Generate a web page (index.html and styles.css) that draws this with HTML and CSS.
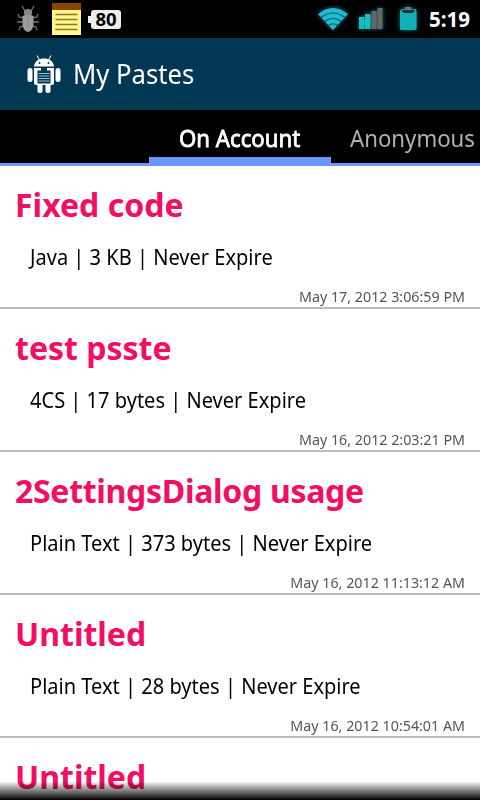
FILE: index.html
```html
<!DOCTYPE html>
<html lang="en">
<head>
  <meta charset="UTF-8" />
  <meta name="viewport" content="width=device-width, initial-scale=1.0"/>
  <title>My Pastes</title>
  <link rel="stylesheet" href="styles.css">
</head>
<body>

  <div class="status-bar">
    <svg class="icon-bug" width="24" height="28" viewBox="0 0 24 28">
      <g fill="none" stroke="#6f6f6f" stroke-width="1.3">
        <path d="M6 1l3 5M18 1l-3 5M8 13L3 12 2 9M16 13l5-1 1-3M7 17H1M17 17h6M8 21l-4 1-1 3M16 21l4 1 1 3"/>
      </g>
      <ellipse cx="12" cy="7.500" rx="4.200" ry="3.500" fill="#858585"/>
      <path d="M6.500 11q5.500-3 11 0v9q-1 6-5.500 7-4.500-1-5.500-7z" fill="#9c9c9c"/>
      <path d="M12 10v16" fill="none" stroke="#8a8a8a"/>
    </svg>
    <svg class="icon-note" width="29" height="32" viewBox="0 0 29 32">
      <rect width="29" height="32" fill="#fdf78c"/>
      <rect width="29" height="7" fill="#8a4509"/>
      <path d="M3.500 11.500h22M3.500 16.500h22M3.500 21.500h22M3.500 26.500h22" stroke="#94742c" stroke-width="1.300"/>
    </svg>
    <div class="battery-level">80</div>
    <svg class="icon-wifi" width="30" height="24" viewBox="0 0 30 24">
      <path d="M0 7Q15-5 30 7L15 23z" fill="#24b9d3"/>
      <path d="M3 10.500q12-9 24 0M6.500 14.500q8.500-6 17 0M10 18.500q5-3.500 10 0" fill="none" stroke="#075a6b" stroke-width="1.200"/>
    </svg>
    <svg class="icon-signal" width="24" height="22" viewBox="0 0 24 22">
      <rect x="0" y="9" width="5.500" height="12" fill="#18bdc4"/>
      <rect x="6" y="6" width="5.500" height="15" fill="#18bdc4"/>
      <rect x="12.500" y="3" width="5" height="18" fill="#6b6664"/>
      <rect x="18.500" y="0" width="5" height="21" fill="#6b6664"/>
    </svg>
    <svg class="icon-battery" width="17" height="24" viewBox="0 0 17 24">
      <path d="M5 0h6v2h5v4H1V2h4z" fill="#77716f"/>
      <rect x="0" y="3" width="16.500" height="20" rx="1" fill="#12b0b7"/>
      <path d="M2 3h12.500v1.500l-2 1.500h-8.500l-2-1.500z" fill="#163c40"/>
    </svg>
    <span class="clock">5:19</span>
  </div>

  <header class="action-bar">
    <svg class="logo" width="34" height="40" viewBox="0 0 34 40">
      <g fill="#fff">
        <path d="M7 12.500C7.500 7 12 4.500 17 4.500S26.500 7 27 12.500z"/>
        <path d="M7 14h20v15q0 2-2 2H9q-2 0-2-2z"/>
        <rect x="0.500" y="14" width="5" height="14" rx="2.500"/>
        <rect x="28.500" y="14" width="5" height="14" rx="2.500"/>
        <rect x="10.500" y="28" width="5" height="11" rx="2"/>
        <rect x="18.500" y="28" width="5" height="11" rx="2"/>
      </g>
      <path d="M12.500 6L10 1.500M21.500 6L24 1.500" stroke="#fff" stroke-width="1"/>
      <circle cx="12.500" cy="9" r="1" fill="#033855"/>
      <circle cx="21.500" cy="9" r="1" fill="#033855"/>
      <rect x="10.500" y="16.500" width="13" height="13" fill="#033855"/>
      <rect x="14" y="14" width="6" height="3" fill="#033855"/>
      <path d="M11.500 19.500h11M11.500 22h11M11.500 24.500h11M11.500 27h11" stroke="#9fb6c3" stroke-width="1"/>
    </svg>
    <h1>My Pastes</h1>
  </header>

  <nav class="tabs">
    <a class="tab active"><span>On Account</span></a>
    <a class="tab"><span>Anonymous</span></a>
  </nav>

  <ul class="paste-list">
    <li class="paste">
      <h2>Fixed code</h2>
      <p class="info">Java | 3 KB | Never Expire</p>
      <p class="date">May 17, 2012 3:06:59 PM</p>
    </li>
    <li class="paste">
      <h2>test psste</h2>
      <p class="info">4CS | 17 bytes | Never Expire</p>
      <p class="date">May 16, 2012 2:03:21 PM</p>
    </li>
    <li class="paste">
      <h2 class="long">2SettingsDialog usage</h2>
      <p class="info">Plain Text | 373 bytes | Never Expire</p>
      <p class="date">May 16, 2012 11:13:12 AM</p>
    </li>
    <li class="paste">
      <h2>Untitled</h2>
      <p class="info">Plain Text | 28 bytes | Never Expire</p>
      <p class="date">May 16, 2012 10:54:01 AM</p>
    </li>
    <li class="paste">
      <h2>Untitled</h2>
    </li>
  </ul>
  <div class="fade"></div>

</body>
</html>
```
FILE: styles.css
```css
* {
  box-sizing: border-box;
}
body {
  font-family: "Noto Sans", "Open Sans", sans-serif;
  background-color: #fff;
  color: #000;
  margin: 0;
  height: 800px;
  display: flex;
  flex-direction: column;
  overflow: hidden;
  position: relative;
}
h1, h2, p, ul {
  margin: 0;
  padding: 0;
  font-weight: normal;
}
svg {
  display: block;
  flex: none;
}
.status-bar {
  flex: none;
  height: 38px;
  background-color: #000;
  display: flex;
  align-items: center;
  padding: 0 9px 0 16px;
}
.icon-note {
  margin-left: 12px;
}
.battery-level {
  position: relative;
  margin-left: 10px;
  width: 30px;
  height: 19px;
  border-radius: 3px;
  background-color: #eee;
  color: #000;
  font-size: 18.5px;
  font-weight: bold;
  line-height: 18px;
  text-align: center;
}
.battery-level::before {
  content: "";
  position: absolute;
  left: -3px;
  top: 6px;
  width: 3px;
  height: 7px;
  background-color: #eee;
}
.icon-wifi {
  margin-left: auto;
}
.icon-wifi, .icon-signal, .icon-battery {
  filter: drop-shadow(0 0 2px #087984);
}
.icon-signal {
  margin-left: 11px;
}
.icon-battery {
  margin-left: 17px;
}
.clock {
  margin-left: 12px;
  width: 42px;
  color: #fff;
  font-size: 20.5px;
  font-weight: bold;
  white-space: nowrap;
}
.action-bar {
  flex: none;
  height: 72px;
  background-color: #033855;
  display: flex;
  align-items: center;
  padding-left: 27px;
}
.action-bar h1 {
  margin-left: 12px;
  color: #fff;
  font-size: 27px;
  line-height: 36px;
  padding-bottom: 1px;
  transform: scaleX(0.95);
  transform-origin: left;
}
.tabs {
  flex: none;
  height: 56px;
  background-color: #000;
  border-bottom: 3px solid #6b95ff;
  display: flex;
  padding-left: 149px;
  overflow: hidden;
}
.tab {
  flex: none;
  width: 149px;
  height: 53px;
  padding: 11px 0 0 19px;
  color: #b2b2b2;
  font-size: 24px;
  line-height: 34px;
  white-space: nowrap;
}
.tab span {
  display: inline-block;
  transform: scaleX(0.925);
  transform-origin: left;
}
.tab.active {
  width: 182px;
  padding-left: 30px;
  color: #fff;
  border-bottom: 6px solid #6b95ff;
}
.tab.active span {
  -webkit-text-stroke: 0.8px #fff;
}
.paste-list {
  flex: 1;
  min-height: 0;
  overflow: hidden;
  list-style: none;
}
.paste {
  height: 143px;
  padding: 16px 15px 0;
  border-bottom: 2px solid #bbb;
  white-space: nowrap;
}
.paste:last-child {
  height: 68px;
  border-bottom: none;
}
.paste h2 {
  color: #f20d65;
  font-size: 32px;
  font-weight: bold;
  line-height: 46px;
}
.paste h2.long {
  letter-spacing: -0.3px;
}
.info {
  padding: 11px 0 0 15px;
  font-size: 22px;
  line-height: 34px;
  transform: scaleX(0.911);
  transform-origin: 15px 0;
}
.date {
  padding-top: 14px;
  color: #555;
  font-size: 14px;
  line-height: 20px;
  text-align: right;
  transform: scaleX(1.02);
  transform-origin: right;
}
.fade {
  position: absolute;
  left: 0;
  right: 0;
  bottom: 0;
  height: 18px;
  background: linear-gradient(rgba(0, 0, 0, 0.05), #000);
}
```
